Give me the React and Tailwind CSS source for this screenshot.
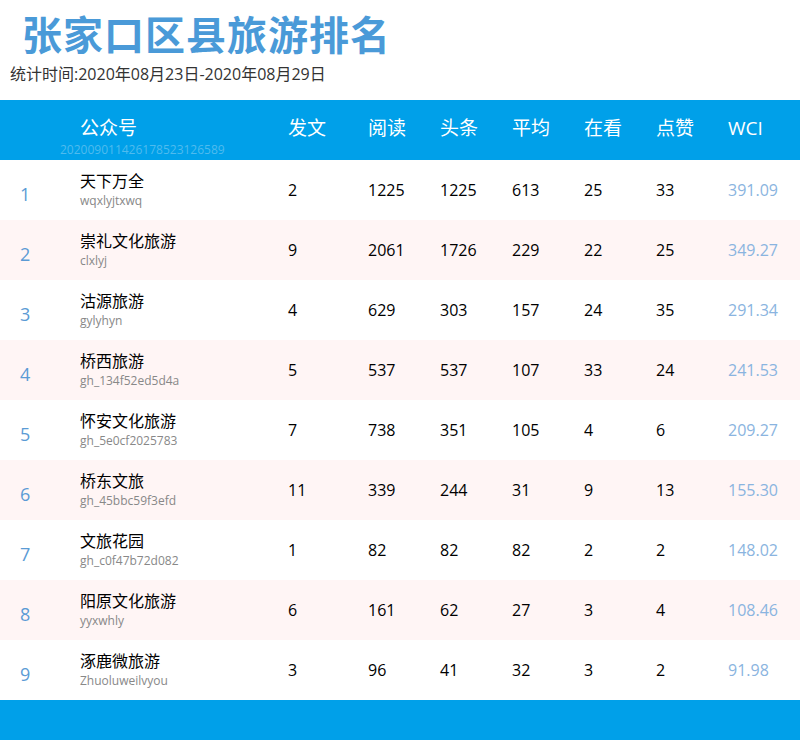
const rows = [
  ["天下万全","wqxlyjtxwq","2","1225","1225","613","25","33","391.09"],
  ["崇礼文化旅游","clxlyj","9","2061","1726","229","22","25","349.27"],
  ["沽源旅游","gylyhyn","4","629","303","157","24","35","291.34"],
  ["桥西旅游","gh_134f52ed5d4a","5","537","537","107","33","24","241.53"],
  ["怀安文化旅游","gh_5e0cf2025783","7","738","351","105","4","6","209.27"],
  ["桥东文旅","gh_45bbc59f3efd","11","339","244","31","9","13","155.30"],
  ["文旅花园","gh_c0f47b72d082","1","82","82","82","2","2","148.02"],
  ["阳原文化旅游","yyxwhly","6","161","62","27","3","4","108.46"],
  ["涿鹿微旅游","Zhuoluweilvyou","3","96","41","32","3","2","91.98"],
];
const ff = { fontFamily: '"Open Sans","Noto Sans CJK SC",sans-serif' };
export default function App() {
  return (
    <div className="w-[800px] h-[740px] bg-white flex flex-col" style={ff}>
      <div className="h-[100px] flex flex-col">
        <div className="pl-[22px] pt-[6px] h-[58px] text-[40px] leading-[58px] font-bold text-[#4a9ad8] tracking-[1px]">张家口区县旅游排名</div>
        <div className="pl-[10px] text-[16px] leading-[32px] text-[#333]">统计时间:2020年08月23日-2020年08月29日</div>
      </div>
      <div className="h-[60px] bg-[#00a0e9] flex text-white text-[19px]">
        <div className="w-[80px]" />
        <div className="w-[208px] flex flex-col pt-[14px]">
          <div className="leading-[28px]">公众号</div>
          <div className="text-[12px] leading-[16px] text-[#4fbbee] -ml-[20px]">20200901142617852312658​9</div>
        </div>
        {["发文","阅读","头条","平均","在看","点赞","WCI"].map((h,i)=>(
          <div key={h} className={(i===0?"w-[80px]":"w-[72px]")+" pt-[14px] leading-[28px]"}>{h}</div>
        ))}
      </div>
      {rows.map((r,idx)=>(
        <div key={idx} className={"h-[60px] flex items-center text-[16px] text-black "+(idx%2? "bg-[#fff5f5]":"bg-white")}>
          <div className="w-[80px] pl-[20px] pt-[8px] text-[18px] text-[#5b9bd5]">{idx+1}</div>
          <div className="w-[208px] flex flex-col">
            <div className="leading-[22px]">{r[0]}</div>
            <div className="text-[12px] leading-[18px] text-[#888]">{r[1]}</div>
          </div>
          {r.slice(2).map((v,i)=>(
            <div key={i} className={(i===0?"w-[80px]":"w-[72px]")+(i===6?" text-[#8ab4e0]":"")}>{v}</div>
          ))}
        </div>
      ))}
      <div className="h-[40px] bg-[#00a0e9]" />
    </div>
  );
}
